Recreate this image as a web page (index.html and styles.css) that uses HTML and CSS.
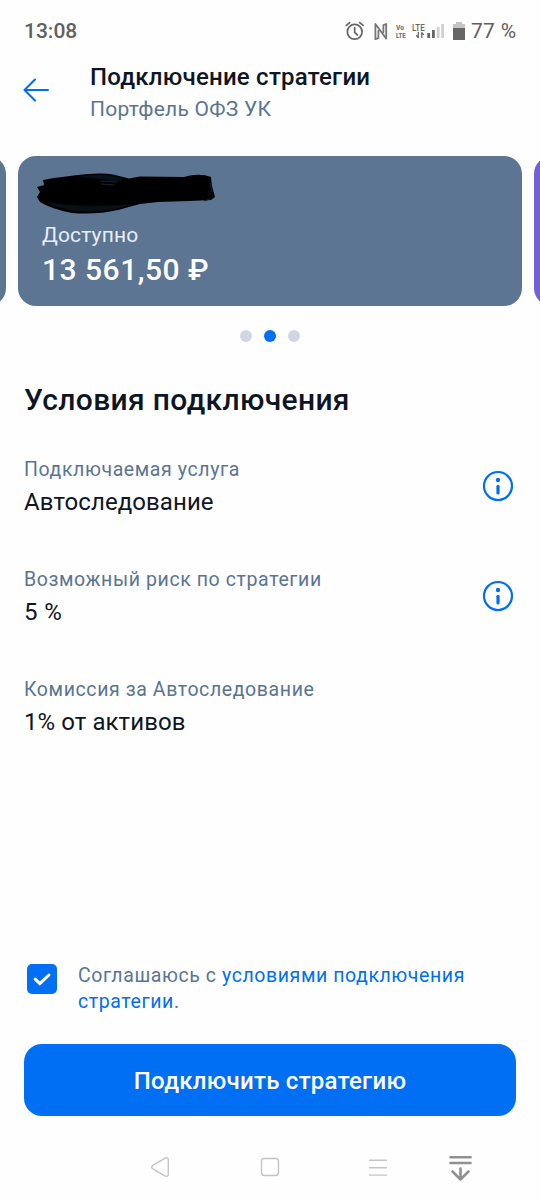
FILE: index.html
```html
<!DOCTYPE html>
<html lang="ru">
<head>
<meta charset="utf-8">
<title>Подключение стратегии</title>
<link rel="stylesheet" href="styles.css">
</head>
<body>
<div class="screen">
  <div class="status">
    <span class="clock">13:08</span>
    <svg class="status-icons" width="126" height="24" viewBox="342 18 126 24" fill="none" stroke="#666" stroke-width="1.7" stroke-linecap="round">
      <circle cx="354.7" cy="30.8" r="7.4"/>
      <path d="M354.7 26.5v4.8l2.6 2.6M346.3 24.4l3.4-2.8M363.1 24.4l-3.4-2.8"/>
      <path d="M378.4 37.2L375.4 38.2V23L386.2 37.6V23L383.4 24.2V31M378.4 37.2V30" stroke="#777" stroke-width="1.8" stroke-linejoin="round"/>
      <g fill="#666" stroke="none" font-family="Roboto, sans-serif">
        <text transform="translate(396 29.2) scale(.92 1)" font-size="7.2" font-weight="700">Vo</text>
        <text transform="translate(396 37.4) scale(.84 1)" font-size="7.2" font-weight="700">LTE</text>
        <text transform="translate(412 29.6) scale(.9 1)" font-size="8.8" font-weight="500">LTE</text>
        <path d="M427.3 32h2.8v5h-2.8zM432 29h2.8v8H432z"/>
        <path d="M436.8 26h2.8v11h-2.8zM441.2 23h2.8v14h-2.8z" fill="#d0d0d0"/>
        <path d="M456 21h6v2h3v4h-12v-4h3z" fill="#c4c4c4"/>
        <path d="M453 27h12v12h-12z"/>
      </g>
      <path d="M418.3 31.5v5M416.5 34.8l1.8 1.8M421.8 36.6v-5M423.4 33.2l-1.6-1.6" stroke-width="1.3"/>
    </svg>
    <span class="battery">77 %</span>
  </div>

  <header class="header">
    <svg class="back" width="28" height="26" viewBox="0 0 28 26" fill="none" stroke="#006ff4" stroke-width="2.1" stroke-linecap="round" stroke-linejoin="round">
      <path d="M26 13H2.5M13 2.5L2.5 13L13 23.5"/>
    </svg>
    <div>
      <h1 class="title">Подключение стратегии</h1>
      <p class="subtitle">Портфель ОФЗ УК</p>
    </div>
  </header>

  <div class="carousel">
    <div class="card"></div>
    <div class="card">
      <svg class="scribble" width="182" height="44" viewBox="35 172 182 44">
        <path d="M43 180L54 178L66 176.5Q98 172 113 174.5L129 178.5L140 176.5L184 177L190 175.5Q202 173.5 211 177L212 186L215 197L211 200L190 201L158 202L140 204L118 210Q96 215 72 213Q51 209 40 202L37 197L40 192L37 187L44 185Z" fill="#000"/>
        <path d="M74 178Q100 171 125 179L114 182Q94 176 74 178ZM46 202Q82 209 133 204Q105 214 75 211Q56 208 46 202Z" fill="#070f18"/>
        <path d="M100 181l18 1M101 184l14 1M210 183l2 9M204 201l6-2" stroke="#16202b" fill="none"/>
      </svg>
      <p class="available">Доступно</p>
      <p class="amount">13 561,50 ₽</p>
    </div>
    <div class="card card-violet"></div>
  </div>
  <div class="dots"><i class="dot"></i><i class="dot dot-active"></i><i class="dot"></i></div>

  <main class="terms">
    <h2 class="heading">Условия подключения</h2>
    <div class="row">
      <div>
        <p class="label">Подключаемая услуга</p>
        <p class="value">Автоследование</p>
      </div>
      <svg class="info" width="32" height="32" viewBox="0 0 32 32"><circle cx="16" cy="16" r="14" fill="none" stroke="#006ff4" stroke-width="2.2"/><circle cx="16" cy="10" r="2.2" fill="#006ff4"/><path d="M16 16.3v6.7" stroke="#006ff4" stroke-width="3.2" stroke-linecap="round"/></svg>
    </div>
    <div class="row">
      <div>
        <p class="label">Возможный риск по стратегии</p>
        <p class="value value-risk">5 %</p>
      </div>
      <svg class="info" width="32" height="32" viewBox="0 0 32 32"><circle cx="16" cy="16" r="14" fill="none" stroke="#006ff4" stroke-width="2.2"/><circle cx="16" cy="10" r="2.2" fill="#006ff4"/><path d="M16 16.3v6.7" stroke="#006ff4" stroke-width="3.2" stroke-linecap="round"/></svg>
    </div>
    <div class="row">
      <div>
        <p class="label">Комиссия за Автоследование</p>
        <p class="value">1% от активов</p>
      </div>
    </div>
  </main>

  <footer class="footer">
    <div class="consent">
      <svg class="check" width="30" height="30" viewBox="0 0 30 30"><rect width="30" height="30" rx="5" fill="#006ff4"/><path d="M8.2 15.2l4.6 4.4L22 11" fill="none" stroke="#fff" stroke-width="3" stroke-linecap="round"/></svg>
      <p class="consent-text">Соглашаюсь с <a class="link">условиями подключения<br>стратегии</a>.</p>
    </div>
    <button class="submit">Подключить стратегию</button>
  </footer>

  <nav class="navbar">
    <svg width="540" height="48" viewBox="0 1143 540 48" fill="none" stroke="#c4c4c4" stroke-width="1.4" stroke-linecap="round" stroke-linejoin="round">
      <path d="M152.8 1165.4L164.8 1158.3Q168.3 1156.8 168.3 1160V1174Q168.3 1177.2 164.8 1175.8L152.8 1168.8Q150.6 1167.2 152.8 1165.4Z"/>
      <rect x="261.5" y="1158.5" width="17" height="17" rx="3"/>
      <path d="M369.5 1160.3h17M369.5 1167.7h17M369.5 1175.1h17"/>
      <path d="M450.5 1157.3h20M450.5 1163h20M460.5 1168.5v11M452.5 1171.5l8 8l8-8" stroke="#919191" stroke-width="2.6"/>
    </svg>
  </nav>
</div>
</body>
</html>
```
FILE: styles.css
```css
* { box-sizing: border-box; }
body, h1, h2, p { margin: 0; }
body { background: #fff; font-family: Roboto, sans-serif; color: #0e1624; }

.screen { display: flex; flex-direction: column; width: 540px; height: 1200px; overflow: hidden; background: #fefefe; }

.status { display: flex; align-items: center; height: 61px; padding: 0 24px; color: #606060; font-size: 21px; line-height: 30px; }
.clock { flex: none; width: 318px; font-weight: 500; }
.status-icons { flex: none; margin-right: 3px; }
.battery { letter-spacing: 0.3px; white-space: nowrap; }

.header { display: flex; height: 95px; padding-left: 22px; }
.back { flex: none; margin: 16px 40px 0 0; }
.title { font-size: 24px; line-height: 32px; font-weight: 500; letter-spacing: 0.23px; }
.subtitle { padding-top: 1px; font-size: 21px; line-height: 30px; color: #5a7594; letter-spacing: 0.25px; }

.carousel { display: flex; justify-content: center; gap: 12px; height: 150px; }
.card { flex: 0 0 504px; padding: 16px 17px 0 24px; border-radius: 18px; background: #5b7592; color: #fff; }
.card-violet { background: #735fd8; }
.scribble { display: block; margin: 0 0 4px -7px; }
.available { font-size: 21px; line-height: 30px; color: #e9eef5; letter-spacing: 0.15px; }
.amount { font-size: 30px; line-height: 40px; font-weight: 500; letter-spacing: 0.5px; }

.dots { display: flex; justify-content: center; gap: 12px; padding: 24px 0 38px; }
.dot { width: 12px; height: 12px; border-radius: 50%; background: #d1d7e2; }
.dot-active { background: #006ff4; }

.terms { padding: 0 26px 0 24px; }
.heading { margin-bottom: 36px; font-size: 30px; line-height: 40px; font-weight: 500; letter-spacing: 0.35px; }
.row { display: flex; justify-content: space-between; height: 110.2px; }
.label { padding-top: 0.6px; font-size: 19.5px; line-height: 26px; color: #5a7594; letter-spacing: 0.6px; }
.value { font-size: 24px; line-height: 39px; letter-spacing: 0.08px; }
.value-risk { letter-spacing: 0.4px; }
.info { margin-top: 14px; }

.footer { margin-top: auto; padding: 0 24px; }
.consent { display: flex; gap: 21px; height: 82px; padding-left: 3px; }
.check { flex: none; margin-top: 2px; }
.consent-text { padding-top: 1px; font-size: 19.5px; line-height: 26px; color: #5a7594; letter-spacing: 0.58px; white-space: nowrap; }
.link { color: #006ff4; }
.submit { display: block; width: 492px; height: 72px; padding: 2px 0 0; border: 0; border-radius: 18px; background: #006ff4; color: #fff; font: 500 24px/40px Roboto, sans-serif; letter-spacing: 0.27px; }

.navbar { height: 84px; padding-top: 27px; }
```
